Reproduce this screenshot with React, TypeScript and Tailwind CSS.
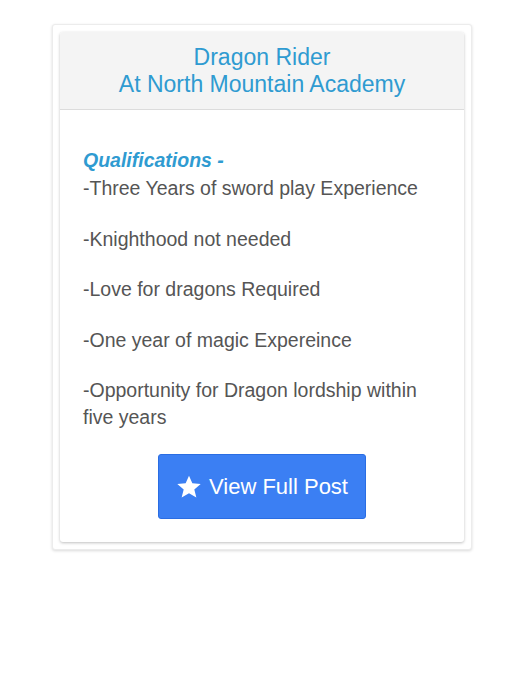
const items = [
  "-Three Years of sword play Experience",
  "-Knighthood not needed",
  "-Love for dragons Required",
  "-One year of magic Expereince",
  "-Opportunity for Dragon lordship within five years",
];

const StarIcon = () => (
  <svg width="26" height="26" viewBox="0 0 24 24" fill="white">
    <path d="M12 1.5l3.1 7.1 7.7.6-5.9 5 1.9 7.6L12 17.7l-6.8 4.1 1.9-7.6-5.9-5 7.7-.6z" />
  </svg>
);

const App = () => {
  return (
    <div className="w-[522px] h-[700px] bg-white font-['Liberation_Sans',Arial,sans-serif]">
      <div className="pt-[24px] pl-[52px]">
        {/* outer frame */}
        <div className="w-[420px] p-[7px] bg-white rounded-[3px] border border-[#ececec] shadow-[0_1px_3px_rgba(0,0,0,0.15)]">
          {/* card */}
          <div className="rounded-[3px] bg-white shadow-[0_1px_3px_rgba(0,0,0,0.25)] overflow-hidden">
            <div className="bg-[#f4f4f4] border-b border-[#dcdcdc] h-[78px] flex flex-col items-center justify-center text-[23px] leading-[27px] text-[#2f9bd1]">
              <span>Dragon Rider</span>
              <span>At North Mountain Academy</span>
            </div>
            <div className="px-[23px] pt-[37px] pb-[23px]">
              <p className="mb-[1px] text-[19.5px] leading-[27px] font-bold italic text-[#2f9bd1]">
                Qualifications -
              </p>
              <div className="flex flex-col gap-[23.5px] text-[19.5px] leading-[27px] text-[#555]">
                {items.map((item, i) => (
                  <p key={i}>{item}</p>
                ))}
              </div>
              <div className="flex justify-center pt-[23px]">
                <button className="w-[208px] h-[65px] flex items-center justify-center gap-[7px] bg-[#3b7ff3] border border-[#2a6de3] rounded-[3px] text-white text-[22px]">
                  <StarIcon />
                  View Full Post
                </button>
              </div>
            </div>
          </div>
        </div>
      </div>
    </div>
  );
};

export default App;
